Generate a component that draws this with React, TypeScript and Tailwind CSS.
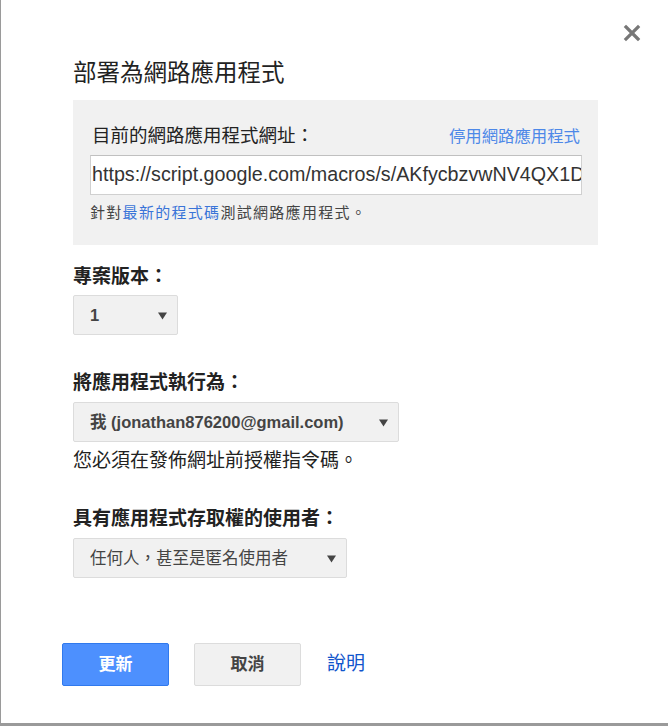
const font = "font-['Arial','Liberation_Sans','Noto_Sans_CJK_TC',sans-serif]";

function Arrow() {
  return (
    <svg width="9" height="9" viewBox="0 0 9 9" className="shrink-0">
      <path d="M0 1.5 L9 1.5 L4.5 8.5 Z" fill="#444" />
    </svg>
  );
}

function Select({ width, label, bold }: { width: string; label: string; bold?: boolean }) {
  return (
    <div
      className={`${width} h-[40px] flex items-center justify-between pl-[16px] pr-[10px] bg-[#f1f1f1] border border-[#dcdcdc] rounded-[2px] text-[16.5px] text-[#444] ${
        bold ? "font-bold" : ""
      }`}
    >
      <span>{label}</span>
      <Arrow />
    </div>
  );
}

export default function App() {
  return (
    <div className={`w-[668px] h-[726px] relative bg-white border-l border-b-[3px] border-[#9a9a9a] ${font}`}>
      {/* close */}
      <button className="absolute left-[622px] top-[24px] w-[18px] h-[18px]">
        <svg width="18" height="18" viewBox="0 0 18 18">
          <path d="M3 3 L15 15 M15 3 L3 15" stroke="#777" strokeWidth="3.2" strokeLinecap="square" />
        </svg>
      </button>

      <div className="pl-[72px] pt-[61px]">
        <h1 className="text-[23.5px] leading-[24px] text-[#222] font-normal">部署為網路應用程式</h1>

        {/* current url panel */}
        <div className="mt-[15px] w-[525px] h-[145px] bg-[#f1f1f1] pl-[17px] pr-[16px] pt-[26px]">
          <div className="flex items-center justify-between pl-[2px] pr-[2px]">
            <span className="text-[18.5px] leading-[20px] text-[#222]">目前的網路應用程式網址：</span>
            <a className="text-[16.4px] leading-[20px] text-[#4d88e8] cursor-pointer">停用網路應用程式</a>
          </div>
          <div className="mt-[9px] h-[40px] bg-white border border-[#d0d0d0] border-t-[#c0c0c0] overflow-hidden flex items-center pl-[1px]">
            <span className="text-[19.7px] text-[#333] whitespace-nowrap">
              https://script.google.com/macros/s/AKfycbzvwNV4QX1DtXy0rPq
            </span>
          </div>
          <p className="mt-[10px] text-[15px] tracking-[1.3px] leading-[16px] text-[#444]">
            針對<a className="text-[#3a74d8] cursor-pointer">最新的程式碼</a>測試網路應用程式。
          </p>
        </div>

        <div className="mt-[22px] text-[19px] leading-[20px] font-bold text-[#222]">專案版本：</div>
        <div className="mt-[8px]">
          <Select width="w-[105px]" label="1" bold />
        </div>

        <div className="mt-[38px] text-[19px] leading-[20px] font-bold text-[#222]">將應用程式執行為：</div>
        <div className="mt-[9px]">
          <Select width="w-[326px]" label="我 (jonathan876200@gmail.com)" bold />
        </div>
        <p className="mt-[9px] text-[19px] leading-[20px] text-[#222]">您必須在發佈網址前授權指令碼。</p>

        <div className="mt-[38px] text-[19px] leading-[20px] font-bold text-[#222]">具有應用程式存取權的使用者：</div>
        <div className="mt-[9px]">
          <Select width="w-[274px]" label="任何人，甚至是匿名使用者" />
        </div>

        <div className="mt-[65px] -ml-[11px] flex items-center">
          <button className="w-[107px] h-[43px] bg-[#4d90fe] border border-[#3079ed] rounded-[2px] text-white text-[17px] font-bold">
            更新
          </button>
          <button className="ml-[25px] w-[107px] h-[43px] bg-[#f1f1f1] border border-[#dcdcdc] rounded-[2px] text-[#444] text-[17px] font-bold">
            取消
          </button>
          <a className="ml-[26px] text-[19px] text-[#1155cc] cursor-pointer">說明</a>
        </div>
      </div>
    </div>
  );
}
